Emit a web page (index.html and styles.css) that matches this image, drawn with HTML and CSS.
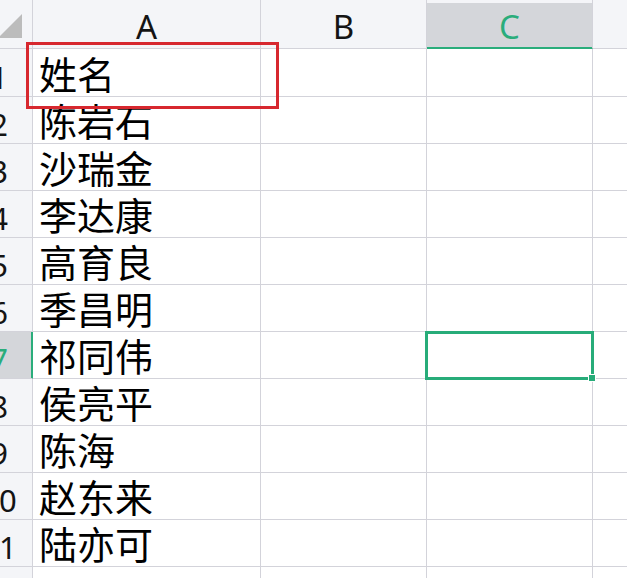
FILE: index.html
```html
<!DOCTYPE html>
<html lang="zh-CN">
<head>
<meta charset="utf-8">
<title>Sheet</title>
<link rel="stylesheet" href="styles.css">
</head>
<body>
<div class="sheet">
  <div class="grid">
    <div class="cell corner"><span class="tri"></span></div>
    <div class="cell colhead">A</div>
    <div class="cell colhead">B</div>
    <div class="cell colhead active-col">C</div>
    <div class="cell colhead"></div>

    <div class="cell rowhead">1</div><div class="cell data">姓名</div><div class="cell data"></div><div class="cell data"></div><div class="cell data"></div>
    <div class="cell rowhead">2</div><div class="cell data">陈岩石</div><div class="cell data"></div><div class="cell data"></div><div class="cell data"></div>
    <div class="cell rowhead">3</div><div class="cell data">沙瑞金</div><div class="cell data"></div><div class="cell data"></div><div class="cell data"></div>
    <div class="cell rowhead">4</div><div class="cell data">李达康</div><div class="cell data"></div><div class="cell data"></div><div class="cell data"></div>
    <div class="cell rowhead">5</div><div class="cell data">高育良</div><div class="cell data"></div><div class="cell data"></div><div class="cell data"></div>
    <div class="cell rowhead">6</div><div class="cell data">季昌明</div><div class="cell data"></div><div class="cell data"></div><div class="cell data"></div>
    <div class="cell rowhead active-row">7</div><div class="cell data">祁同伟</div><div class="cell data"></div><div class="cell data"></div><div class="cell data"></div>
    <div class="cell rowhead">8</div><div class="cell data">侯亮平</div><div class="cell data"></div><div class="cell data"></div><div class="cell data"></div>
    <div class="cell rowhead">9</div><div class="cell data">陈海</div><div class="cell data"></div><div class="cell data"></div><div class="cell data"></div>
    <div class="cell rowhead">10</div><div class="cell data">赵东来</div><div class="cell data"></div><div class="cell data"></div><div class="cell data"></div>
    <div class="cell rowhead">11</div><div class="cell data">陆亦可</div><div class="cell data"></div><div class="cell data"></div><div class="cell data"></div>
    <div class="cell rowhead">12</div><div class="cell data"></div><div class="cell data"></div><div class="cell data"></div><div class="cell data"></div>
  </div>
  <div class="red-box"></div>
  <div class="selection"><span class="handle"></span></div>
</div>
</body>
</html>
```

FILE: styles.css
```css
html, body {
  margin: 0;
  padding: 0;
  background: #ffffff;
}

.sheet {
  position: relative;
  width: 627px;
  height: 578px;
  overflow: hidden;
  background: #ffffff;
}

.grid {
  display: grid;
  margin-left: -34px;
  grid-template-columns: 67px 228px 166px 166px 240px;
  grid-template-rows: 49px 48px repeat(11, 47px);
}

.cell {
  box-sizing: border-box;
  border-right: 1px solid #d3d3da;
  border-bottom: 1px solid #d3d3da;
  overflow: hidden;
  white-space: nowrap;
}

.corner {
  background: #f4f5f8;
  display: flex;
  justify-content: flex-end;
  align-items: flex-end;
  padding: 0 10px 10px 0;
}

.tri {
  width: 0;
  height: 0;
  border-left: 24px solid transparent;
  border-bottom: 24px solid #bcbcbc;
}

.colhead {
  background: #f4f5f8;
  display: flex;
  justify-content: center;
  align-items: center;
  font-family: "Noto Sans", "Noto Sans CJK SC", sans-serif;
  font-size: 33px;
  color: #141414;
  line-height: 1;
  padding-top: 5px;
}

.active-col {
  background: #d4d6da;
  color: #2aad7b;
  border-bottom: 1px solid #2aad7b;
  box-shadow: inset 0 -1px 0 #2aad7b, inset 0 3px 0 #f4f5f8;
}

.rowhead {
  background: #f4f5f8;
  display: flex;
  justify-content: center;
  align-items: flex-end;
  font-family: "Noto Sans", "Noto Sans CJK SC", sans-serif;
  font-size: 31px;
  color: #141414;
  line-height: 1.1;
  padding-bottom: 2px;
}

.active-row {
  background: #d4d6da;
  color: #2aad7b;
  border-right-color: #2aad7b;
  box-shadow: inset -1px 0 0 #2aad7b;
}

.data {
  display: flex;
  align-items: flex-end;
  padding-left: 6px;
  padding-bottom: 2px;
  font-family: "Noto Sans CJK SC", "Noto Sans", sans-serif;
  font-size: 38px;
  line-height: 1.1;
  color: #000000;
}

.red-box {
  position: absolute;
  left: 26px;
  top: 42px;
  width: 253px;
  height: 67px;
  box-sizing: border-box;
  border: 3px solid #d7282f;
}

.selection {
  position: absolute;
  left: 425px;
  top: 331px;
  width: 169px;
  height: 49px;
  box-sizing: border-box;
  border: 3px solid #27ac79;
}

.handle {
  position: absolute;
  right: -5px;
  bottom: -5px;
  width: 6px;
  height: 6px;
  background: #27ac79;
  border: 1px solid #ffffff;
}
```
